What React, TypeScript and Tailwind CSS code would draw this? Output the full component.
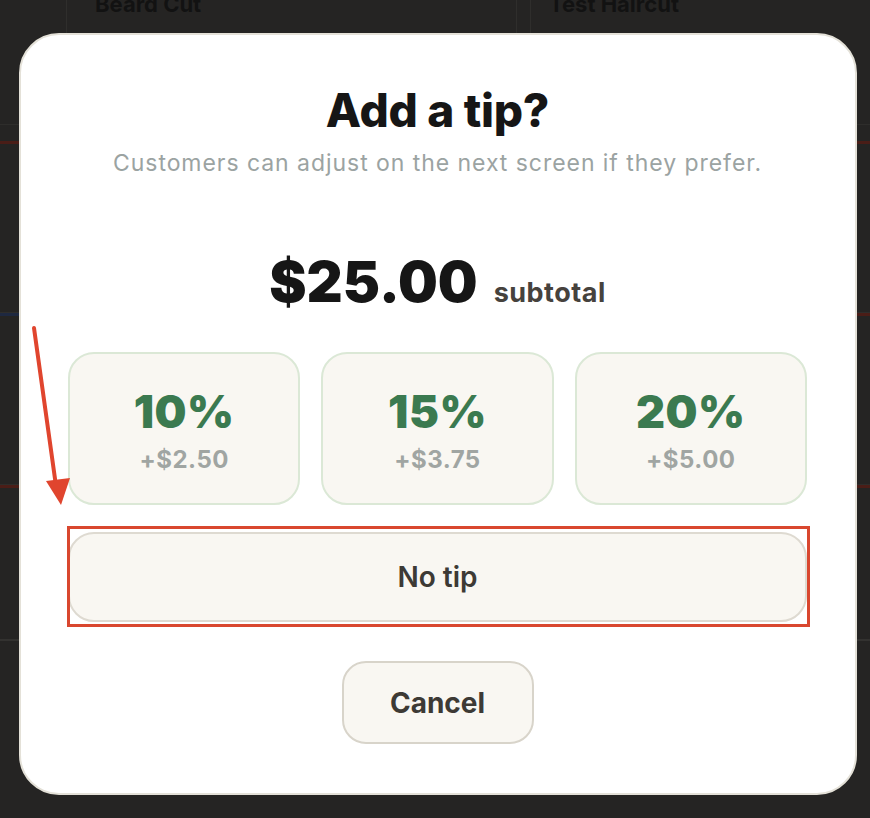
import React from 'react';

const tips = [
  { pct: '10%', amt: '+$2.50' },
  { pct: '15%', amt: '+$3.75' },
  { pct: '20%', amt: '+$5.00' },
];

function Backdrop() {
  return (
    <div className="flex h-full flex-col">
      {/* faded cards behind the modal */}
      <div className="grid h-[125px] grid-cols-[451px_451px] gap-[13px] border-b border-[#2e2d2b] pl-[66px]">
        <div className="-mt-[12px] border-x border-[#2f2e2c] pl-[28px]">
          <span className="text-[22px] font-bold text-[#121212]">Beard Cut</span>
        </div>
        <div className="-mt-[12px] border-x border-[#2f2e2c] pl-[18px]">
          <span className="text-[22px] font-bold text-[#121212]">Test Haircut</span>
        </div>
      </div>
      <div className="h-[16px]" />
      <div className="h-[3px] bg-[#4a1d17]" />
      <div className="h-[169px] border-b border-[#2e2d2b]" />
      <div className="flex h-[3px]">
        <div className="w-1/2 bg-[#1e2840]" />
        <div className="w-1/2 bg-[#4a1d17]" />
      </div>
      <div className="h-[169px] border-b border-[#2e2d2b]" />
      <div className="h-[3px] bg-[#4a1d17]" />
      <div className="h-[151px]" />
      <div className="h-[2px] bg-[#333230]" />
    </div>
  );
}

export default function App() {
  return (
    <div
      className="relative h-[818px] w-full overflow-hidden bg-[#252423]"
      style={{ fontFamily: 'Inter, "Liberation Sans", sans-serif' }}
    >
      <Backdrop />

      {/* Tip modal */}
      <div className="absolute left-[19px] top-[33px] flex h-[762px] w-[838px] flex-col items-center rounded-[40px] border-2 border-[#e4e1d8] bg-white pl-[47px] pr-[48px] pt-[52px]">
        <h1 className="text-[46px] font-extrabold leading-none tracking-[-0.3px] text-[#161616]">Add a tip?</h1>
        <p className="mt-[19px] text-[23px] leading-none tracking-[0.95px] text-[#9ba3a2]">
          Customers can adjust on the next screen if they prefer.
        </p>

        <div className="mt-[79px] flex items-baseline gap-[16px]">
          <span className="text-[56px] font-black leading-none text-[#161616]">$25.00</span>
          <span className="text-[27px] font-bold leading-none tracking-[0.5px] text-[#46423d]">subtotal</span>
        </div>

        <div className="mt-[42px] grid w-full grid-cols-3 gap-[21px]">
          {tips.map((t) => (
            <button
              key={t.pct}
              className="flex h-[153px] flex-col items-center rounded-[26px] border-2 border-[#dbe8d6] bg-[#f9f7f2] pt-[35px]"
            >
              <span className="text-[45px] font-black leading-none tracking-[0.5px] text-[#3b7a50]">{t.pct}</span>
              <span className="mt-[14px] text-[24px] font-bold leading-none tracking-[0.5px] text-[#a0a5a2]">{t.amt}</span>
            </button>
          ))}
        </div>

        <div className="relative mt-[27px] w-full">
          <button className="flex h-[90px] w-full items-center justify-center rounded-[26px] border-2 border-[#dedad1] bg-[#f9f7f2] text-[28px] font-semibold text-[#3d3a35]">
            No tip
          </button>
          {/* annotation box */}
          <div className="pointer-events-none absolute -bottom-[5px] -left-[1px] -right-[3px] -top-[6px] border-[3px] border-[#d9472f]" />
        </div>

        <button className="mt-[39px] h-[83px] w-[192px] rounded-[24px] border-2 border-[#d8d4ca] bg-[#f9f7f2] text-[28px] font-bold text-[#3d3a35]">
          Cancel
        </button>
      </div>

      {/* annotation arrow */}
      <svg className="pointer-events-none absolute left-0 top-0" width="100" height="520">
        <line x1="34" y1="328" x2="56" y2="486" stroke="#e0452e" strokeWidth="4" strokeLinecap="round" />
        <polygon points="46,481 70,478 61,505" fill="#e0452e" />
      </svg>
    </div>
  );
}
